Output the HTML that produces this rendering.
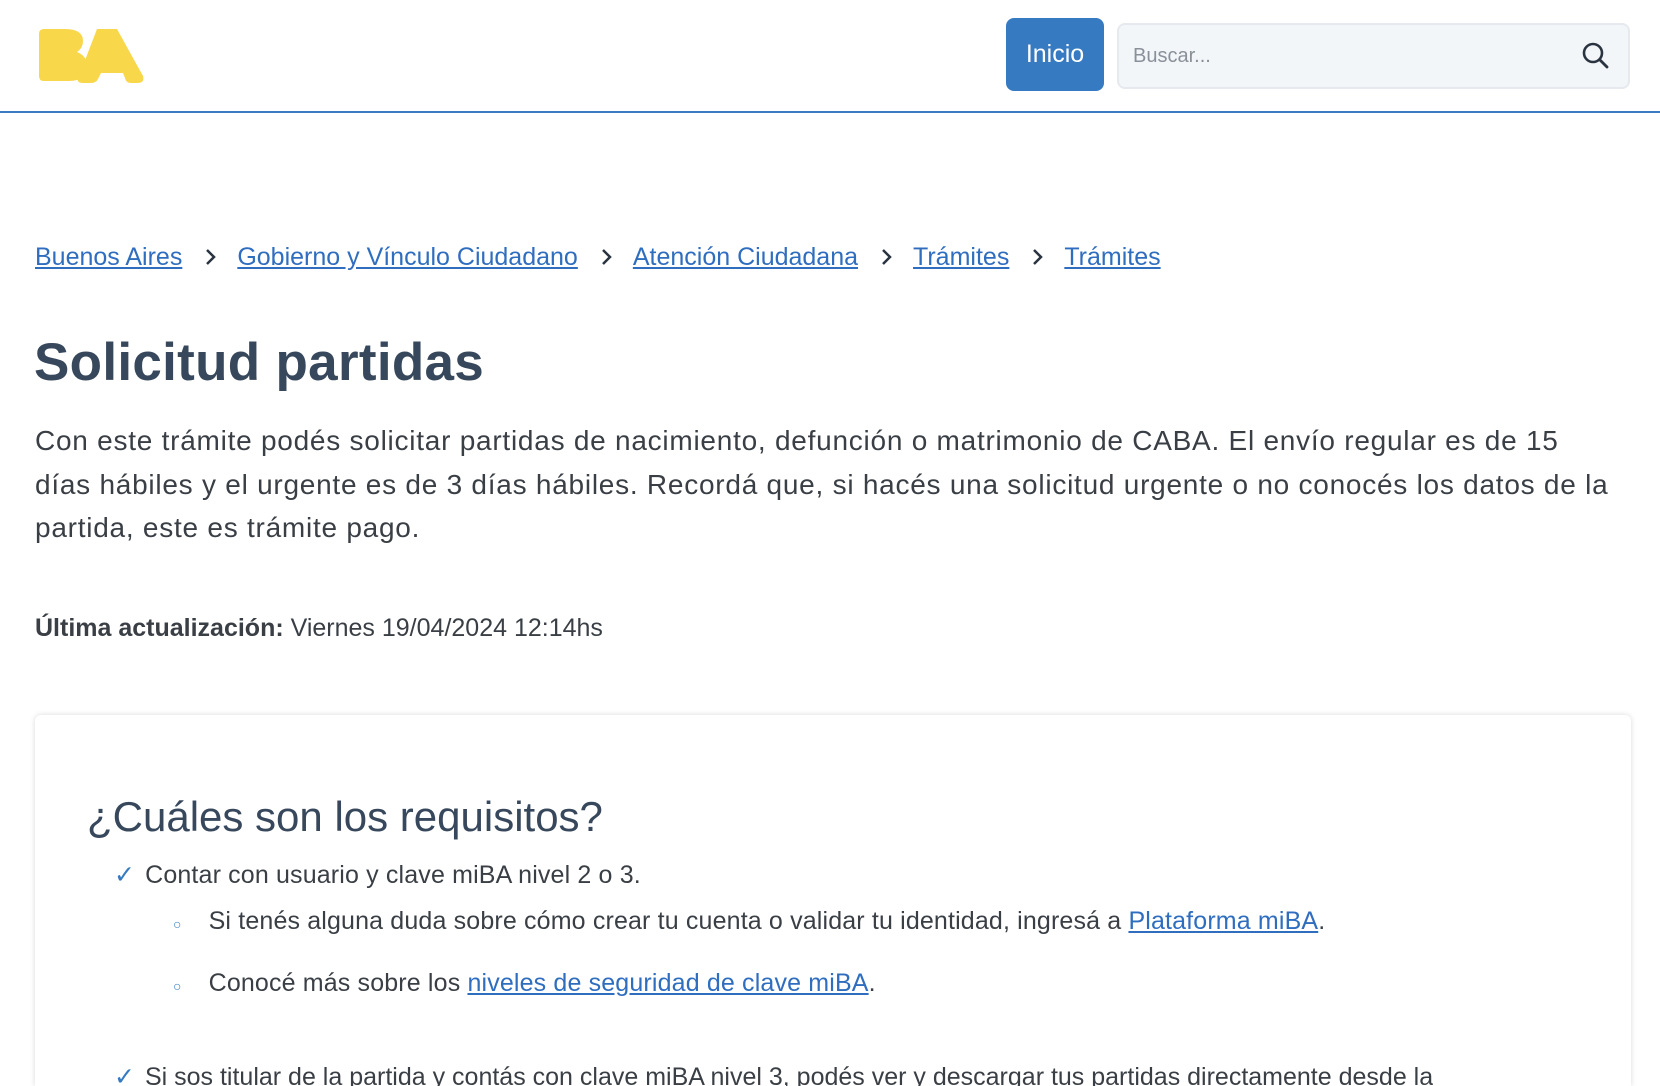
<!DOCTYPE html>
<html style="width:1660px;height:1086px;overflow:hidden"><head><meta charset="utf-8"><style>
*{margin:0;padding:0;box-sizing:border-box}
body{width:1660px;height:1086px;overflow:hidden;background:#fff;font-family:"Liberation Sans",sans-serif;color:#38485c;position:relative}
.a{position:absolute;white-space:nowrap}
a{color:#2f6dbf;text-decoration:underline}
.hdr{position:absolute;left:0;top:0;width:1660px;height:113px;border-bottom:2px solid #3a7bc3}
.btn{left:1006px;top:18px;width:98px;height:73px;background:#367ac2;border-radius:8px;color:#fff;font-size:25px;line-height:73px;text-align:center}
.search{left:1117px;top:23px;width:513px;height:66px;background:#f3f6f9;border:2px solid #e6e9ed;border-radius:8px}
.bc{top:243px;font-size:25px;color:#38485c}
.bc svg{margin:0 21px 0 22px;vertical-align:-1px}
.p{left:35px;top:419px;font-size:28px;letter-spacing:0.75px;line-height:43.5px;color:#3a3f45}
.card{position:absolute;left:35px;top:715px;width:1596px;height:371px;background:#fff;border-radius:6px 6px 0 0;box-shadow:0 0 6px rgba(0,0,0,.15)}
.li{font-size:25px;letter-spacing:0.15px;color:#3a3f45}
</style></head><body>
<div class="hdr"></div>
<svg class="a" style="left:35px;top:26px" width="110" height="60" viewBox="0 0 110 60">
<path d="M4 8 Q4 3 9 3 L30 3 Q48 3 48 15 Q48 22 42 26 Q52 30 52 40 Q52 55 34 55 L9 55 Q4 55 4 50 Z" fill="#f8d74a"/>
<path d="M62 3 L82 3 L108 50 Q110 57 102 57 L96 57 Q91 57 90 52 L88 47 L66 47 L63 53 Q61 57 56 57 L48 57 Q40 57 44 50 Z" fill="#f8d74a"/>
</svg>
<div class="a btn">Inicio</div>
<div class="a search"><span class="a" style="left:14px;top:20px;font-size:20px;color:#8a9099">Buscar...</span>
<svg class="a" style="left:462px;top:16px" width="30" height="30" viewBox="0 0 30 30"><circle cx="12" cy="12" r="9" fill="none" stroke="#2a3340" stroke-width="2.6"/><line x1="19" y1="19" x2="26" y2="26" stroke="#2a3340" stroke-width="2.8" stroke-linecap="round"/></svg></div>
<div class="a bc" style="left:35px"><a>Buenos Aires</a><svg width="12" height="18" viewBox="0 0 12 18"><path d="M3 2 L10 9 L3 16" fill="none" stroke="#2a3340" stroke-width="2.5"/></svg><a>Gobierno y Vínculo Ciudadano</a><svg width="12" height="18" viewBox="0 0 12 18"><path d="M3 2 L10 9 L3 16" fill="none" stroke="#2a3340" stroke-width="2.5"/></svg><a>Atención Ciudadana</a><svg width="12" height="18" viewBox="0 0 12 18"><path d="M3 2 L10 9 L3 16" fill="none" stroke="#2a3340" stroke-width="2.5"/></svg><a>Trámites</a><svg width="12" height="18" viewBox="0 0 12 18"><path d="M3 2 L10 9 L3 16" fill="none" stroke="#2a3340" stroke-width="2.5"/></svg><a>Trámites</a></div>
<div class="a" style="left:34px;top:332px;font-size:53px;letter-spacing:0.3px;font-weight:bold;color:#38485c">Solicitud partidas</div>
<div class="a p">Con este trámite podés solicitar partidas de nacimiento, defunción o matrimonio de CABA. El envío regular es de 15<br>días hábiles y el urgente es de 3 días hábiles. Recordá que, si hacés una solicitud urgente o no conocés los datos de la<br>partida, este es trámite pago.</div>
<div class="a" style="left:35px;top:614px;font-size:25px;color:#3a3f45"><b>Última actualización:</b> Viernes 19/04/2024 12:14hs</div>
<div class="card"></div>
<div class="a" style="left:87px;top:793px;font-size:42px;color:#38485c">¿Cuáles son los requisitos?</div>
<div class="a li" style="left:114px;top:860px"><span style="color:#367ac2;margin-right:10px">✓</span>Contar con usuario y clave miBA nivel 2 o 3.</div>
<div class="a li" style="left:173px;top:907px"><span style="color:#367ac2;font-size:14px;margin-right:27px">○</span>Si tenés alguna duda sobre cómo crear tu cuenta o validar tu identidad, ingresá a <a>Plataforma miBA</a>.</div>
<div class="a li" style="left:173px;top:969px"><span style="color:#367ac2;font-size:14px;margin-right:27px">○</span>Conocé más sobre los <a>niveles de seguridad de clave miBA</a>.</div>
<div class="a li" style="left:114px;top:1062px;letter-spacing:0;height:24px;overflow:hidden"><span style="color:#367ac2;margin-right:10px">✓</span>Si sos titular de la partida y contás con clave miBA nivel 3, podés ver y descargar tus partidas directamente desde la</div>
</body></html>
